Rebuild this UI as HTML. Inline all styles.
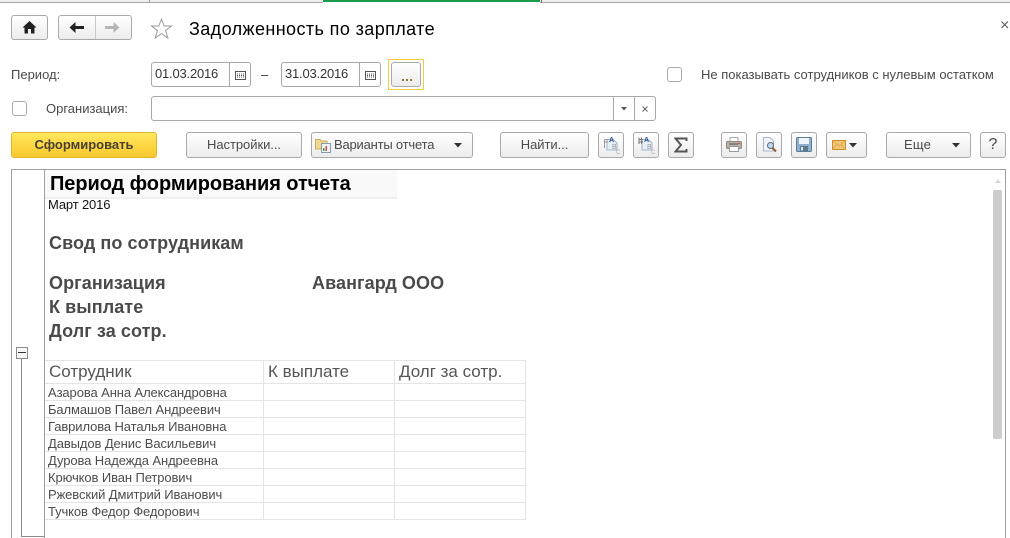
<!DOCTYPE html>
<html lang="ru"><head><meta charset="utf-8"><title>Задолженность по зарплате</title>
<style>
html,body{margin:0;padding:0;background:#fff}
#p{position:relative;width:1010px;height:538px;overflow:hidden;background:#fff;font-family:"Liberation Sans",Arial,sans-serif;font-size:13px;color:#4a4a4a}
#p div,#p svg{position:absolute;box-sizing:border-box}
.t{white-space:nowrap;line-height:16px}
.b{border:1px solid #a9a9a9;border-radius:3px;background:linear-gradient(#fff,#ececec);height:26px;top:132px;text-align:center;line-height:24px;white-space:nowrap;letter-spacing:-.05px}
.i{border:1px solid #a9a9a9;border-radius:3px;background:#fff}
.h{background:#e4e4e4}
.r{left:48px;font-size:13px;color:#4c4c4c;letter-spacing:-.1px}
.bt{font-weight:bold;font-size:18px;color:#4a4a4a;letter-spacing:.08px}
.th{font-size:17px;color:#555;top:364px}
</style></head><body><div id="p">
<div style="left:0;top:0;width:1010px;height:2px;background:#eeeeee"></div>
<div style="left:0;top:2px;width:1010px;height:1px;background:#a8a8a8"></div>
<div style="left:149px;top:0;width:1px;height:3px;background:#999"></div>
<div style="left:323px;top:0;width:217px;height:2px;background:#1b9a4b"></div>
<div style="left:323px;top:2px;width:217px;height:1px;background:#fff"></div>
<div style="left:541px;top:0;width:1px;height:3px;background:#777"></div>

<div class="b" style="left:11px;top:15px;width:37px;height:25px"></div>
<svg style="left:22px;top:21px" width="15" height="13" viewBox="0 0 15 13"><path d="M7.500 0L14.500 6.500H12.500V12.500H9V8H6V12.500H2.500V6.500H.5Z" fill="#222"/></svg>
<div class="b" style="left:58px;top:15px;width:74px;height:25px"></div>
<div style="left:95px;top:16px;width:1px;height:23px;background:#c8c8c8"></div>
<svg style="left:69px;top:21px" width="16" height="13" viewBox="0 0 16 13"><path d="M6.500 1V5H15V8H6.500V12L.5 6.500Z" fill="#222"/></svg>
<svg style="left:104px;top:21px" width="16" height="13" viewBox="0 0 16 13"><path d="M9.500 1V5H1V8H9.500V12L15.500 6.500Z" fill="#b5b5b5"/></svg>
<svg style="left:150px;top:17px" width="23" height="23" viewBox="0 0 23 23"><path d="M11.500 2L14.200 9H21.500L15.600 13.500L17.800 21L11.500 16.600L5.200 21L7.400 13.500L1.500 9H8.800Z" fill="#fff" stroke="#9a9a9a" stroke-width="1"/></svg>
<div class="t" style="left:189px;top:19px;font-size:18px;line-height:20px;color:#000;letter-spacing:.4px">Задолженность по зарплате</div>
<svg style="left:1001px;top:21px" width="8" height="8" viewBox="0 0 8 8"><path d="M.5 .5L7 7M7 .5L.5 7" stroke="#555" fill="none"/></svg>

<div class="t" style="left:11px;top:67px">Период:</div>
<div class="i" style="left:151px;top:62px;width:100px;height:25px"></div>
<div style="left:229px;top:63px;width:1px;height:23px;background:#a9a9a9"></div>
<div class="t" style="left:155px;top:66px;color:#333;letter-spacing:-.2px">01.03.2016</div>
<svg style="left:235px;top:71px" width="11" height="9" viewBox="0 0 11 9"><rect x=".5" y=".5" width="10" height="8" fill="#fff" stroke="#555"/><path d="M2 3H9M2 4.500H9M2 6H9" stroke="#555" stroke-dasharray="1 1"/></svg>
<div class="t" style="left:261px;top:67px;color:#333">–</div>
<div class="i" style="left:281px;top:62px;width:100px;height:25px"></div>
<div style="left:359px;top:63px;width:1px;height:23px;background:#a9a9a9"></div>
<div class="t" style="left:285px;top:66px;color:#333;letter-spacing:-.2px">31.03.2016</div>
<svg style="left:365px;top:71px" width="11" height="9" viewBox="0 0 11 9"><rect x=".5" y=".5" width="10" height="8" fill="#fff" stroke="#555"/><path d="M2 3H9M2 4.500H9M2 6H9" stroke="#555" stroke-dasharray="1 1"/></svg>
<div style="left:388px;top:59px;width:36px;height:31px;border:1px solid #f3cb3c"></div>
<div class="b" style="left:391px;top:62px;width:30px;height:25px"></div>
<svg style="left:402px;top:79px" width="10" height="2" viewBox="0 0 10 2"><path d="M0 0h2v2H0zM4 0h2v2H4zM8 0h2v2H8z" fill="#8a7a40"/></svg>

<div class="i" style="left:667px;top:67px;width:15px;height:15px"></div>
<div class="t" style="left:701px;top:67px">Не показывать сотрудников с нулевым остатком</div>
<div class="i" style="left:12px;top:101px;width:15px;height:15px"></div>
<div class="t" style="left:46px;top:101px">Организация:</div>
<div class="i" style="left:151px;top:96px;width:505px;height:25px"></div>
<div style="left:613px;top:97px;width:1px;height:23px;background:#a9a9a9"></div>
<div style="left:634px;top:97px;width:1px;height:23px;background:#a9a9a9"></div>
<svg style="left:621px;top:107px" width="6" height="4" viewBox="0 0 6 4"><path d="M0 0H6L3 3.500Z" fill="#555"/></svg>
<svg style="left:642px;top:106px" width="6" height="6" viewBox="0 0 6 6"><path d="M.5 .5L5.500 5.500M5.500 .5L.5 5.500" stroke="#666" fill="none"/></svg>

<div class="b" style="left:11px;width:146px;border-color:#e2b42a;background:linear-gradient(#ffe75e,#f9c82c);font-weight:bold;font-size:13px;color:#4a4030;letter-spacing:0">Сформировать</div>
<div class="b" style="left:186px;width:116px">Настройки...</div>
<div class="b" style="left:311px;width:162px"></div>
<svg style="left:315px;top:137px" width="17" height="16" viewBox="0 0 17 16"><path d="M.5 2.500H5L6.500 4H12V12H.5Z" fill="#efd98e" stroke="#c9ad5c"/><rect x="6.500" y="6.500" width="9" height="9" fill="#eef3f8" stroke="#8a9bb0"/><path d="M8 14h1.500v-3H8z" fill="#3aa04a"/><path d="M10.500 14H12V9h-1.500z" fill="#d94a3a"/></svg>
<div class="t" style="left:334px;top:137px;letter-spacing:-.2px">Варианты отчета</div>
<svg style="left:454px;top:143px" width="8" height="5" viewBox="0 0 8 5"><path d="M0 0H8L4 4.500Z" fill="#333"/></svg>
<div class="b" style="left:500px;width:89px">Найти...</div>

<div class="b" style="left:598px;width:26px"></div>
<svg style="left:602px;top:135px" width="20" height="20" viewBox="0 0 20 20"><path d="M5 4.500H11L15 8V15H5Z" fill="#e6eef6" stroke="#a3b4c6"/><path d="M2.500 4.500H6M2.500 7H6M2.500 4.500V13" stroke="#999" fill="none"/><text x="7" y="7" font-size="7" font-weight="bold" fill="#2a4f9c" font-family="Liberation Sans">A</text><text x="10" y="14" font-size="7" fill="#999" font-family="Liberation Sans">B</text><text x="14" y="19" font-size="6" fill="#aaa" font-family="Liberation Sans">C</text></svg>
<div class="b" style="left:633px;width:26px"></div>
<svg style="left:637px;top:135px" width="20" height="20" viewBox="0 0 20 20"><path d="M5 4.500H11L15 8V15H5Z" fill="#e6eef6" stroke="#a3b4c6"/><path d="M2 4.500H6M2 7H6M2 2.500V9M4.500 2.500V9" stroke="#777" fill="none"/><text x="7" y="7" font-size="7" font-weight="bold" fill="#2a4f9c" font-family="Liberation Sans">A</text><text x="10" y="14" font-size="7" fill="#999" font-family="Liberation Sans">B</text><text x="14" y="19" font-size="6" fill="#aaa" font-family="Liberation Sans">C</text></svg>
<div class="b" style="left:668px;width:26px"></div>
<svg style="left:674px;top:137px" width="14" height="16" viewBox="0 0 14 16"><path d="M12.500 4V1.500H1.500L7 8L1.500 14.500H12.500V12" fill="none" stroke="#555" stroke-width="2"/></svg>

<div class="b" style="left:721px;width:26px"></div>
<svg style="left:725px;top:136px" width="18" height="17" viewBox="0 0 18 17"><rect x="5" y="1.500" width="8" height="5" fill="#fff" stroke="#aaa"/><rect x="1.500" y="5.500" width="15" height="7" rx="1" fill="#b8b0a6" stroke="#8f887e"/><rect x="4.500" y="10.500" width="9" height="5" fill="#fff" stroke="#999"/><path d="M4 8H13" stroke="#555"/><path d="M13 7.500h2" stroke="#d44"/></svg>
<div class="b" style="left:756px;width:26px"></div>
<svg style="left:761px;top:136px" width="17" height="17" viewBox="0 0 17 17"><path d="M2.500 1.500H9L12.500 5V15H2.500Z" fill="#f2f6fb" stroke="#a7b8ca"/><circle cx="9.500" cy="9.500" r="3" fill="#bcdcf0" stroke="#667"/><path d="M11.500 12L15 15.500" stroke="#9a5a2a" stroke-width="2"/></svg>
<div class="b" style="left:791px;width:26px"></div>
<svg style="left:795px;top:136px" width="18" height="17" viewBox="0 0 18 17"><rect x="1.500" y="1.500" width="15" height="14" rx="1" fill="#8fb0cc" stroke="#5c7f9e"/><rect x="4" y="2" width="10" height="6" fill="#eef4f8"/><rect x="5" y="10" width="8" height="5.500" fill="#5a7890"/><rect x="6" y="11" width="2" height="3.500" fill="#dbe5ec"/></svg>
<div class="b" style="left:826px;width:41px"></div>
<svg style="left:832px;top:140px" width="14" height="10" viewBox="0 0 14 10"><rect x=".5" y=".5" width="13" height="9" fill="#f2c777" stroke="#c98f2e"/><path d="M.5 .5L7 6L13.500 .5M.5 9.500L5 4.500M13.500 9.500L9 4.500" stroke="#e0a84c" fill="none"/></svg>
<svg style="left:849px;top:143px" width="8" height="5" viewBox="0 0 8 5"><path d="M0 0H8L4 4.500Z" fill="#333"/></svg>
<div class="b" style="left:886px;width:85px;text-align:left;padding-left:17px;font-size:13px;letter-spacing:.2px">Еще</div>
<svg style="left:952px;top:143px" width="8" height="5" viewBox="0 0 8 5"><path d="M0 0H8L4 4.500Z" fill="#333"/></svg>
<div class="b" style="left:980px;width:26px;font-size:16px;letter-spacing:0">?</div>

<div style="left:11px;top:169px;width:995px;height:380px;border:1px solid #a0a0a0"></div>
<div style="left:44px;top:170px;width:1px;height:368px;background:#a0a0a0"></div>
<div style="left:16px;top:347px;width:12px;height:12px;border:1px solid #8c8c8c;background:#f7f7f7"></div>
<div style="left:18px;top:352px;width:8px;height:1px;background:#333"></div>
<div style="left:21px;top:359px;width:1px;height:178px;background:#8c8c8c"></div>
<div style="left:21px;top:536px;width:24px;height:1px;background:#8c8c8c"></div>

<div style="left:45px;top:170px;width:352px;height:29px;background:#f9f9f9;border-bottom:2px solid #f0f0f0"></div>
<div class="t" style="left:50px;top:174px;font-size:20px;line-height:20px;font-weight:bold;color:#000;letter-spacing:-.08px">Период формирования отчета</div>
<div class="t" style="left:48px;top:197px;color:#111;letter-spacing:-.15px">Март 2016</div>
<div class="t bt" style="left:49px;top:235px">Свод по сотрудникам</div>
<div class="t bt" style="left:49px;top:275px">Организация</div>
<div class="t bt" style="left:312px;top:275px">Авангард ООО</div>
<div class="t bt" style="left:49px;top:299px">К выплате</div>
<div class="t bt" style="left:49px;top:323px">Долг за сотр.</div>

<div class="h" style="left:45px;top:360px;width:481px;height:1px"></div>
<div class="h" style="left:45px;top:383px;width:481px;height:1px"></div>
<div class="h" style="left:45px;top:400px;width:481px;height:1px"></div>
<div class="h" style="left:45px;top:417px;width:481px;height:1px"></div>
<div class="h" style="left:45px;top:434px;width:481px;height:1px"></div>
<div class="h" style="left:45px;top:451px;width:481px;height:1px"></div>
<div class="h" style="left:45px;top:468px;width:481px;height:1px"></div>
<div class="h" style="left:45px;top:485px;width:481px;height:1px"></div>
<div class="h" style="left:45px;top:502px;width:481px;height:1px"></div>
<div class="h" style="left:45px;top:519px;width:481px;height:1px"></div>
<div class="h" style="left:263px;top:360px;width:1px;height:160px"></div>
<div class="h" style="left:394px;top:360px;width:1px;height:160px"></div>
<div class="h" style="left:525px;top:360px;width:1px;height:160px"></div>
<div class="t th" style="left:49px">Сотрудник</div>
<div class="t th" style="left:268px">К выплате</div>
<div class="t th" style="left:399px">Долг за сотр.</div>
<div class="t r" style="top:385px">Азарова Анна Александровна</div>
<div class="t r" style="top:402px">Балмашов Павел Андреевич</div>
<div class="t r" style="top:419px">Гаврилова Наталья Ивановна</div>
<div class="t r" style="top:436px">Давыдов Денис Васильевич</div>
<div class="t r" style="top:453px">Дурова Надежда Андреевна</div>
<div class="t r" style="top:470px">Крючков Иван Петрович</div>
<div class="t r" style="top:487px">Ржевский Дмитрий Иванович</div>
<div class="t r" style="top:504px">Тучков Федор Федорович</div>

<svg style="left:995px;top:179px" width="6" height="4" viewBox="0 0 6 4"><path d="M3 0L6 4H0Z" fill="#d8d8d8"/></svg>
<div style="left:993px;top:190px;width:9px;height:249px;background:#cdcdcd;border-radius:2px"></div>
</div></body></html>
